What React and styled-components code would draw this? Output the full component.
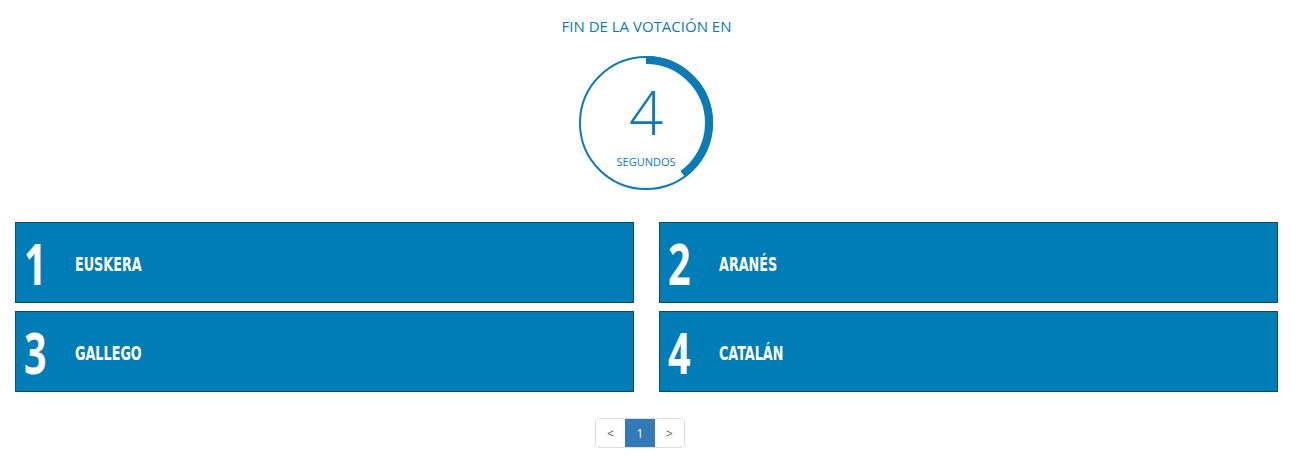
import React from "react";
import styled, { createGlobalStyle } from "styled-components";

const Global = createGlobalStyle`
  html, body { margin: 0; padding: 0; background: #fff; }
  body { font-family: "Open Sans", "Liberation Sans", sans-serif; }
`;

const Page = styled.div`
  width: 1302px;
  height: 457px;
  box-sizing: border-box;
  padding: 16px 24px 0 15px;
  display: flex;
  flex-direction: column;
  align-items: center;
`;

const Title = styled.div`
  font-size: 15px;
  color: #0f7ab3;
  line-height: 20px;
  height: 20px;
  text-transform: uppercase;
`;

const Timer = styled.div`
  position: relative;
  width: 136px;
  height: 136px;
  margin-top: 19px;
  margin-left: -1px;
`;

const TimerSvg = styled.svg`
  display: block;
`;

const TimerText = styled.div`
  position: absolute;
  inset: 0;
  display: flex;
  flex-direction: column;
  align-items: center;
  color: #0f7ab3;
`;

const Seconds = styled.div`
  font-weight: 300;
  font-size: 60px;
  line-height: 60px;
  margin-top: 27px;
`;

const Unit = styled.div`
  font-size: 11px;
  line-height: 12px;
  margin-top: 14px;
`;

const Grid = styled.div`
  align-self: stretch;
  display: grid;
  grid-template-columns: 1fr 1fr;
  column-gap: 25px;
  row-gap: 8px;
  margin-top: 31px;
`;

const Option = styled.div`
  height: 81px;
  box-sizing: border-box;
  background: #007cb7;
  border: 1px solid #0d4a6a;
  display: flex;
  align-items: center;
  color: #fff;
  overflow: hidden;
`;

const Num = styled.div`
  flex: 0 0 59px;
  box-sizing: border-box;
  padding-left: 8px;
  font-family: "Open Sans", sans-serif;
  font-size: 58px;
  font-weight: 700;
  line-height: 58px;
  margin-top: 1px;
  transform: scaleX(0.68);
  transform-origin: 8px 50%;
`;

const Label = styled.div`
  font-family: "DejaVu Sans", sans-serif;
  font-stretch: condensed;
  font-size: 20px;
  font-weight: 700;
  text-transform: uppercase;
  white-space: nowrap;
  margin-top: 2px;
  transform: scaleX(0.71);
  transform-origin: 0 50%;
`;

const Pager = styled.div`
  display: flex;
  margin-top: 26px;
  margin-left: -13px;
  border: 1px solid #ddd;
  border-radius: 4px;
  overflow: hidden;
`;

const PageBtn = styled.div`
  width: ${(p) => (p.$active ? "30px" : "29px")};
  height: 28px;
  display: flex;
  align-items: center;
  justify-content: center;
  font-size: 12px;
  color: ${(p) => (p.$active ? "#fff" : "#555")};
  background: ${(p) => (p.$active ? "#337ab7" : "#fff")};
`;

const options = [
  { n: 1, label: "Euskera" },
  { n: 2, label: "Aranés" },
  { n: 3, label: "Gallego" },
  { n: 4, label: "Catalán" },
];

function Ring({ value, total }) {
  const r = 63;
  const c = 2 * Math.PI * r;
  const frac = value / total;
  return (
    <TimerSvg width="136" height="136" viewBox="0 0 136 136">
      <circle cx="68" cy="68" r="66" fill="none" stroke="#0f7ab3" strokeWidth="2" />
      <circle
        cx="68"
        cy="68"
        r={r}
        fill="none"
        stroke="#0a7bb7"
        strokeWidth="8"
        strokeDasharray={`${c * frac} ${c}`}
        transform="rotate(-90 68 68)"
      />
    </TimerSvg>
  );
}

export default function App() {
  return (
    <>
      <Global />
      <Page>
        <Title>Fin de la votación en</Title>
        <Timer>
          <Ring value={4} total={10} />
          <TimerText>
            <Seconds>4</Seconds>
            <Unit>SEGUNDOS</Unit>
          </TimerText>
        </Timer>
        <Grid>
          {options.map((o) => (
            <Option key={o.n}>
              <Num>{o.n}</Num>
              <Label>{o.label}</Label>
            </Option>
          ))}
        </Grid>
        <Pager>
          <PageBtn>&lt;</PageBtn>
          <PageBtn $active>1</PageBtn>
          <PageBtn>&gt;</PageBtn>
        </Pager>
      </Page>
    </>
  );
}
